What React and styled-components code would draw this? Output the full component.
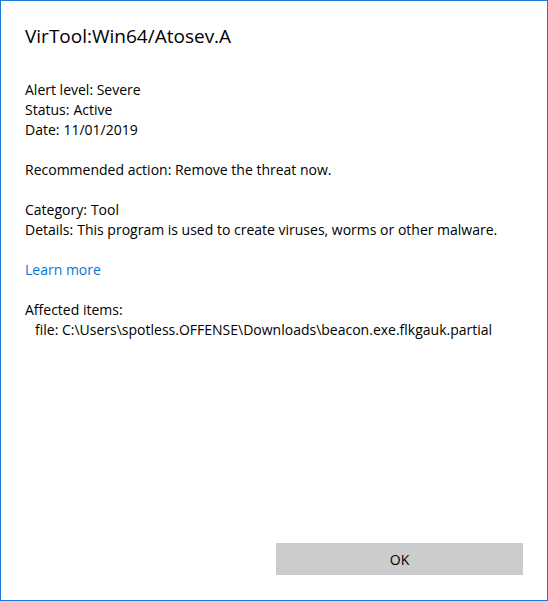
import styled, { createGlobalStyle } from "styled-components";

const GlobalStyle = createGlobalStyle`
    html, body {
        margin: 0;
        padding: 0;
        background: #ffffff;
    }
    * {
        box-sizing: border-box;
    }
`;

const Dialog = styled.div`
    width: 548px;
    height: 601px;
    border: 1px solid #1a7ad4;
    background: #ffffff;
    display: flex;
    flex-direction: column;
    padding: 21px 24px 25px 24px;
    font-family: "Open Sans", "Noto Sans", sans-serif;
    font-size: 14px;
    color: #000000;
`;

const Title = styled.h1`
    margin: 0 0 30px 0;
    font-size: 19px;
    line-height: 28px;
    font-weight: 400;
`;

const Group = styled.div`
    margin-bottom: 20px;
`;

const Line = styled.div`
    font-size: 14px;
    line-height: 20px;
    white-space: nowrap;
    padding-left: ${(p) => (p.indent ? "10px" : "0")};
`;

const Label = styled.span`
    margin-right: 4px;
`;

const Link = styled.a`
    display: block;
    font-size: 14px;
    line-height: 20px;
    color: #0078d7;
    text-decoration: none;
    cursor: pointer;
`;

const Footer = styled.div`
    margin-top: auto;
    display: flex;
    justify-content: flex-end;
`;

const Button = styled.button`
    width: 247px;
    height: 32px;
    border: none;
    background: #cccccc;
    font-family: inherit;
    font-size: 14px;
    color: #000000;
    cursor: pointer;
`;

const App = () => {
    return (
        <>
            <GlobalStyle />
            <Dialog>
                <Title>VirTool:Win64/Atosev.A</Title>
                <Group>
                    <Line>Alert level: Severe</Line>
                    <Line>
                        <Label>Status:</Label>Active
                    </Line>
                    <Line>
                        <Label>Date:</Label>11/01/2019
                    </Line>
                </Group>
                <Group>
                    <Line>Recommended action: Remove the threat now.</Line>
                </Group>
                <Group>
                    <Line>
                        <Label>Category:</Label>Tool
                    </Line>
                    <Line>
                        <Label>Details:</Label>This program is used to create viruses, worms or other malware.
                    </Line>
                </Group>
                <Group>
                    <Link>Learn more</Link>
                </Group>
                <Group>
                    <Line>Affected items:</Line>
                    <Line indent>file: C:\Users\spotless.OFFENSE\Downloads\beacon.exe.flkgauk.partial</Line>
                </Group>
                <Footer>
                    <Button>OK</Button>
                </Footer>
            </Dialog>
        </>
    );
};

export default App;
